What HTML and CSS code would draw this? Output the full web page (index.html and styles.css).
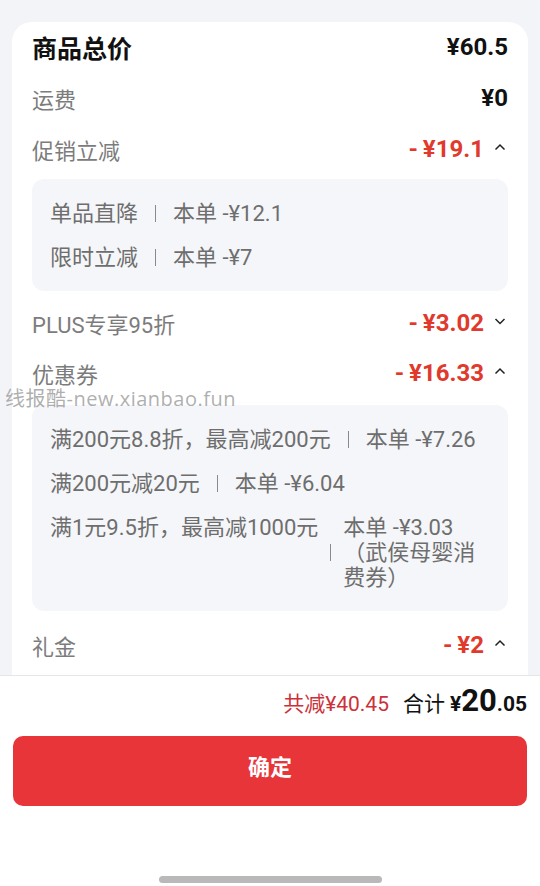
FILE: index.html
```html
<!DOCTYPE html>
<html lang="zh-CN">
<head>
    <meta charset="UTF-8">
    <meta name="viewport" content="width=device-width, initial-scale=1.0">
    <title>价格明细</title>
    <link rel="stylesheet" href="styles.css">
</head>
<body>
    <div class="screen">
        <!-- Price detail list -->
        <div class="scroll">
            <div class="card">
                <div class="row row-title">
                    <span class="label">商品总价</span>
                    <span class="amount">¥60.5</span>
                </div>
                <div class="row">
                    <span class="label">运费</span>
                    <span class="amount">¥0</span>
                </div>
                <div class="row">
                    <span class="label">促销立减</span>
                    <span class="amount red">-&thinsp;¥19.1</span>
                    <svg class="caret" viewBox="0 0 12 8"><path d="M1.5 6.5 L6 2 L10.5 6.5"/></svg>
                </div>
                <div class="detail">
                    <div class="detail-line">
                        <span class="detail-name">单品直降</span>
                        <span class="sep"></span>
                        <span class="detail-val">本单 -¥12.1</span>
                    </div>
                    <div class="detail-line">
                        <span class="detail-name">限时立减</span>
                        <span class="sep"></span>
                        <span class="detail-val">本单 -¥7</span>
                    </div>
                </div>
                <div class="row row-plus">
                    <span class="label">PLUS专享95折</span>
                    <span class="amount red">-&thinsp;¥3.02</span>
                    <svg class="caret" viewBox="0 0 12 8"><path d="M1.5 2 L6 6.5 L10.5 2"/></svg>
                </div>
                <div class="row">
                    <span class="label">优惠券</span>
                    <span class="amount red">-&thinsp;¥16.33</span>
                    <svg class="caret" viewBox="0 0 12 8"><path d="M1.5 6.5 L6 2 L10.5 6.5"/></svg>
                </div>
                <div class="detail detail-coupon">
                    <div class="detail-line">
                        <span class="detail-name">满200元8.8折，最高减200元</span>
                        <span class="sep"></span>
                        <span class="detail-val">本单 -¥7.26</span>
                    </div>
                    <div class="detail-line">
                        <span class="detail-name">满200元减20元</span>
                        <span class="sep"></span>
                        <span class="detail-val">本单 -¥6.04</span>
                    </div>
                    <div class="detail-line multi">
                        <span class="detail-name">满1元9.5折，最高减1000元</span>
                        <span class="sep"></span>
                        <span class="detail-val wrap">本单 -¥3.03（武侯母婴消费券）</span>
                    </div>
                </div>
                <div class="row row-gap">
                    <span class="label">礼金</span>
                    <span class="amount red">-&thinsp;¥2</span>
                    <svg class="caret" viewBox="0 0 12 8"><path d="M1.5 6.5 L6 2 L10.5 6.5"/></svg>
                </div>
            </div>
            <div class="watermark">线报酷-new.xianbao.fun</div>
        </div>

        <!-- Footer with total and confirm -->
        <div class="bottom">
            <div class="summary">
                <span class="saved">共减¥40.45</span>
                <span class="total-label">合计</span>
                <span class="total"><span class="small">¥</span>20<span class="small">.05</span></span>
            </div>
            <button class="confirm">确定</button>
            <div class="home-bar"></div>
        </div>
    </div>
</body>
</html>
```

FILE: styles.css
```css
/* Global */
body {
    margin: 0;
    padding: 0;
    font-family: Roboto, "Noto Sans CJK SC", sans-serif;
    color: #1a1a1a;
    background-color: #fff;
}

.screen {
    width: 540px;
    height: 886px;
    display: flex;
    flex-direction: column;
    overflow: hidden;
}

/* Scroll area */
.scroll {
    position: relative;
    height: 675px;
    flex-shrink: 0;
    overflow: hidden;
    background-color: #f3f4f8;
    padding: 22px 12px 0;
    box-sizing: border-box;
}

.card {
    background-color: #fff;
    border-radius: 20px;
    padding: 0 20px 40px;
}

.row {
    height: 51px;
    display: flex;
    align-items: center;
    padding-bottom: 2px;
    box-sizing: border-box;
}

.row-plus {
    height: 49px;
    margin-top: 8px;
}

.row-gap {
    margin-top: 9px;
}

.label {
    flex: 1;
    font-size: 22px;
    color: #7c7c7c;
}

.row-title .label {
    font-size: 25px;
    font-weight: bold;
    color: #111;
}

.amount {
    font-size: 24px;
    font-weight: bold;
    color: #111;
}

.amount.red {
    color: #df3a2c;
}

.caret {
    width: 12px;
    height: 8px;
    margin: 0 2px 4px 10px;
    fill: none;
    stroke: #222;
    stroke-width: 1.5;
}

/* Detail boxes */
.detail {
    margin-top: 4px;
    background-color: #f5f6f9;
    border-radius: 12px;
    padding: 12px 18px;
}

.detail-coupon {
    margin-top: 6px;
}

.detail-line {
    display: flex;
    align-items: flex-start;
    padding: 9.5px 0;
    font-size: 22px;
    line-height: 25px;
    color: #6e6e6e;
}

.detail-name {
    flex-shrink: 0;
}

.sep {
    align-self: center;
    width: 1px;
    height: 17px;
    background-color: #8a8a8a;
    margin: 0 17px;
    flex-shrink: 0;
}

.multi .sep {
    margin: 0 12px;
}

.detail-val {
    min-width: 0;
}

.detail-val.wrap {
    max-width: 140px;
}

/* Watermark over the list */
.watermark {
    position: absolute;
    left: 5px;
    top: 386px;
    font-family: "Open Sans", "Noto Sans CJK SC", sans-serif;
    font-size: 20px;
    line-height: 26px;
    letter-spacing: 0.5px;
    color: rgba(140, 140, 140, 0.7);
    white-space: nowrap;
}

/* Bottom bar */
.bottom {
    flex: 1;
    border-top: 1px solid #e6e6e6;
    background-color: #fff;
    display: flex;
    flex-direction: column;
    align-items: stretch;
}

.summary {
    display: flex;
    justify-content: flex-end;
    align-items: baseline;
    padding: 10px 13px 0 0;
    height: 30px;
    line-height: 30px;
}

.saved {
    font-size: 21px;
    color: #cc3139;
    margin-right: 14px;
}

.total-label {
    font-size: 21px;
    color: #111;
    margin-right: 5px;
}

.total {
    font-size: 31px;
    font-weight: bold;
    color: #111;
}

.total .small {
    font-size: 21px;
}

.confirm {
    margin: 20px 13px 0;
    height: 70px;
    padding: 0 0 12px;
    border: none;
    border-radius: 10px;
    background-color: #e8353a;
    color: #fff;
    font-family: "Noto Sans CJK SC", sans-serif;
    font-size: 22px;
    font-weight: bold;
}

.home-bar {
    width: 223px;
    height: 7px;
    border-radius: 4px;
    background-color: #b9b9b9;
    margin: auto auto 3px;
}
```
